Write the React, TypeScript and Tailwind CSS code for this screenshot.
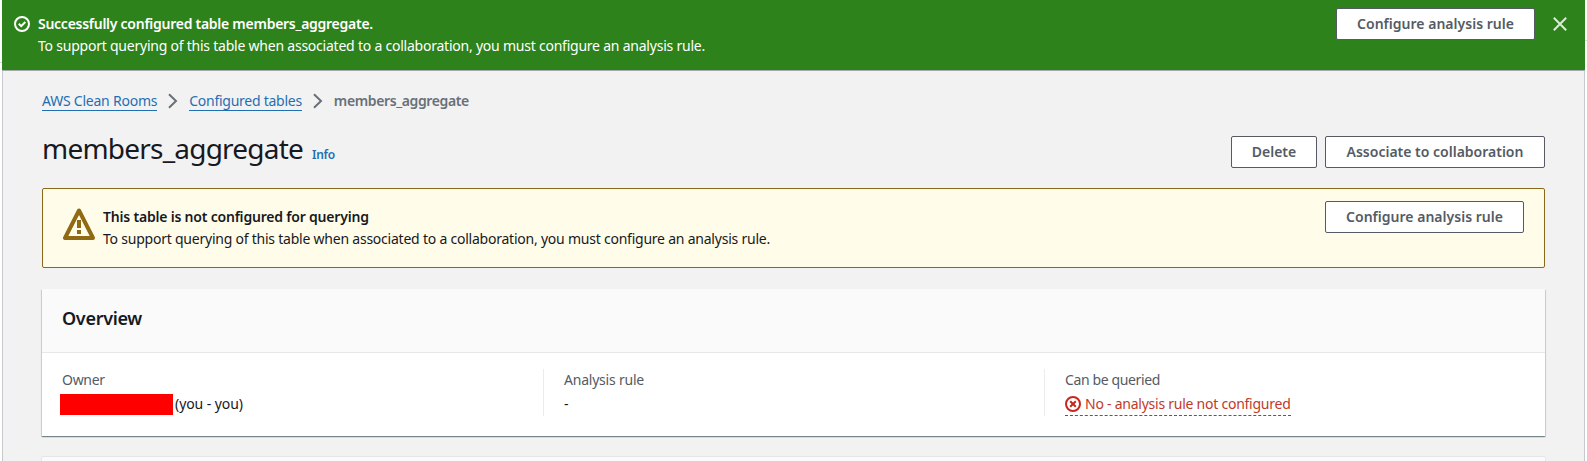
import type { ReactNode } from "react";

function Button({ children, className = "" }: { children: ReactNode; className?: string }) {
  return (
    <button
      className={`flex h-8 shrink-0 items-center justify-center whitespace-nowrap rounded-[2px] border border-[#545b64] bg-white text-[14px] font-semibold leading-[22px] text-[#545b64] ${className}`}
    >
      {children}
    </button>
  );
}

function Chevron() {
  return (
    <svg width="10" height="16" viewBox="0 0 10 16" fill="none" stroke="#687078" strokeWidth="2" className="shrink-0">
      <path d="M1 1.2 8 8 1 14.8" />
    </svg>
  );
}

function SuccessIcon() {
  return (
    <svg width="16" height="16" viewBox="0 0 16 16" fill="none" stroke="#fff" strokeWidth="2" className="ml-[2px] mt-4 shrink-0">
      <circle cx="8" cy="8" r="7" />
      <path d="M4.8 7.8 7.2 10.2 11.3 6" />
    </svg>
  );
}

function CloseIcon() {
  return (
    <svg width="14" height="14" viewBox="0 0 14 14" fill="none" stroke="#dcebd8" strokeWidth="2" className="mt-[17px] shrink-0">
      <path d="M.8.8 13.2 13.2M13.2.8.8 13.2" />
    </svg>
  );
}

function WarningIcon() {
  return (
    <svg width="32" height="32" viewBox="0 0 32 32" fill="none" stroke="#8f6914" className="mt-[19px] shrink-0">
      <path d="M16 2.5 2 30H30Z" strokeWidth="4" strokeLinejoin="round" />
      <path d="M16 12V20M16 22V26" strokeWidth="4" />
    </svg>
  );
}

function ErrorIcon() {
  return (
    <svg width="16" height="16" viewBox="0 0 16 16" fill="none" stroke="#c5281c" strokeWidth="2" className="shrink-0">
      <circle cx="8" cy="8" r="7" />
      <path d="M5.2 5.2 10.8 10.8M10.8 5.2 5.2 10.8" />
    </svg>
  );
}

export default function App() {
  return (
    <div className="flex h-[461px] w-full overflow-hidden whitespace-nowrap bg-white font-['Noto_Sans',sans-serif] text-[14px] leading-[22px] text-[#16191f]">
      <div className="mt-[62px] h-px w-[2px] shrink-0 bg-[#d5dbdb]" />
      <div className="flex min-w-0 flex-1 flex-col">
        <header className="flex h-[70px] shrink-0 bg-[#2d821b] pl-[10px] text-white">
          <SuccessIcon />
          <div className="ml-2 flex-1 pt-[13px]">
            <p className="font-semibold tracking-[-0.265px]">Successfully configured table members_aggregate.</p>
            <p className="tracking-[-0.227px]">To support querying of this table when associated to a collaboration, you must configure an analysis rule.</p>
          </div>
          <Button className="mt-2 w-[199px] tracking-[0.02px]">Configure analysis rule</Button>
          <div className="ml-[18px] w-8">
            <CloseIcon />
          </div>
        </header>

        <main className="flex flex-1 flex-col border-x border-t border-x-[#c6cacc] border-t-[#a4a9ab] bg-[#f2f2f3] pl-[39px] pr-[39px]">
          <nav className="mt-[19px] flex h-[22px] items-center">
            <a className="h-5 border-b border-[#1f6fb2] leading-[20px] tracking-[-0.23px] text-[#1f6fb2]">AWS Clean Rooms</a>
            <div className="ml-[11px] mr-[11px]"><Chevron /></div>
            <a className="h-5 border-b border-[#1f6fb2] leading-[20px] tracking-[-0.26px] text-[#1f6fb2]">Configured tables</a>
            <div className="ml-[11px] mr-[11px]"><Chevron /></div>
            <span className="font-semibold leading-[20px] tracking-[-0.38px] text-[#687078]">members_aggregate</span>
          </nav>

          <div className="mt-6 flex h-8 items-start">
            <div className="flex flex-1 items-baseline">
              <h1 className="-mt-[6px] text-[28px] leading-[36px] tracking-[-0.785px]">members_aggregate</h1>
              <a className="ml-[9px] text-[12px] font-semibold leading-[20px] tracking-[-0.3px] text-[#1f6fb2]">Info</a>
            </div>
            <div className="flex gap-2">
              <Button className="w-[86px]">Delete</Button>
              <Button className="w-[220px]">Associate to collaboration</Button>
            </div>
          </div>

          <section className="mt-5 flex h-20 shrink-0 rounded-[2px] border border-[#8b6718] bg-[#fffde9] pl-5 pr-5">
            <WarningIcon />
            <div className="ml-2 flex-1 pt-[17px]">
              <p className="font-semibold tracking-[-0.2px]">This table is not configured for querying</p>
              <p className="tracking-[-0.227px]">To support querying of this table when associated to a collaboration, you must configure an analysis rule.</p>
            </div>
            <Button className="mt-3 w-[199px] tracking-[0.02px]">Configure analysis rule</Button>
          </section>

          <section className="mt-[21px] h-[147px] shrink-0 bg-white shadow-[0_1px_1px_0_rgba(0,28,36,0.4),1px_1px_1px_0_rgba(0,28,36,0.1),-1px_1px_1px_0_rgba(0,28,36,0.1)]">
            <div className="flex h-16 items-center border-b border-[#e6e8e8] bg-[#fafafa] pb-[5px] pl-5">
              <h2 className="text-[18px] font-semibold leading-[22px] tracking-[-0.3px]">Overview</h2>
            </div>
            <div className="flex pt-4">
              <div className="h-[47px] w-[501px] pl-[18px]">
                <p className="pl-[2px] leading-[22px] tracking-[-0.3px] text-[#545b64]">Owner</p>
                <div className="mt-[3px] flex h-[21px] items-center">
                  <span className="h-[21px] w-[113px] bg-[#ff0000]" />
                  <span className="-mt-px ml-[2px] leading-[20px] tracking-[-0.065px]">(you - you)</span>
                </div>
              </div>
              <div className="h-[47px] w-[501px] border-l border-[#eaeded] pl-5">
                <p className="leading-[22px] tracking-[-0.216px] text-[#545b64]">Analysis rule</p>
                <p className="mt-[3px] leading-[20px]">-</p>
              </div>
              <div className="h-[47px] border-l border-[#eaeded] pl-5">
                <p className="leading-[22px] tracking-[-0.371px] text-[#545b64]">Can be queried</p>
                <div className="mt-px flex h-6 w-[226px] items-center gap-1 border-b border-dashed border-[#545b64] text-[#c0392b]">
                  <ErrorIcon />
                  <span className="tracking-[-0.245px]">No - analysis rule not configured</span>
                </div>
              </div>
            </div>
          </section>

          <section className="mt-[21px] h-16 shrink-0 bg-[#fafafa] shadow-[0_0_1px_0_rgba(0,28,36,0.3)]" />
        </main>
      </div>
      <div className="mt-10 h-px w-[2px] shrink-0 bg-[#d5dbdb]" />
    </div>
  );
}
